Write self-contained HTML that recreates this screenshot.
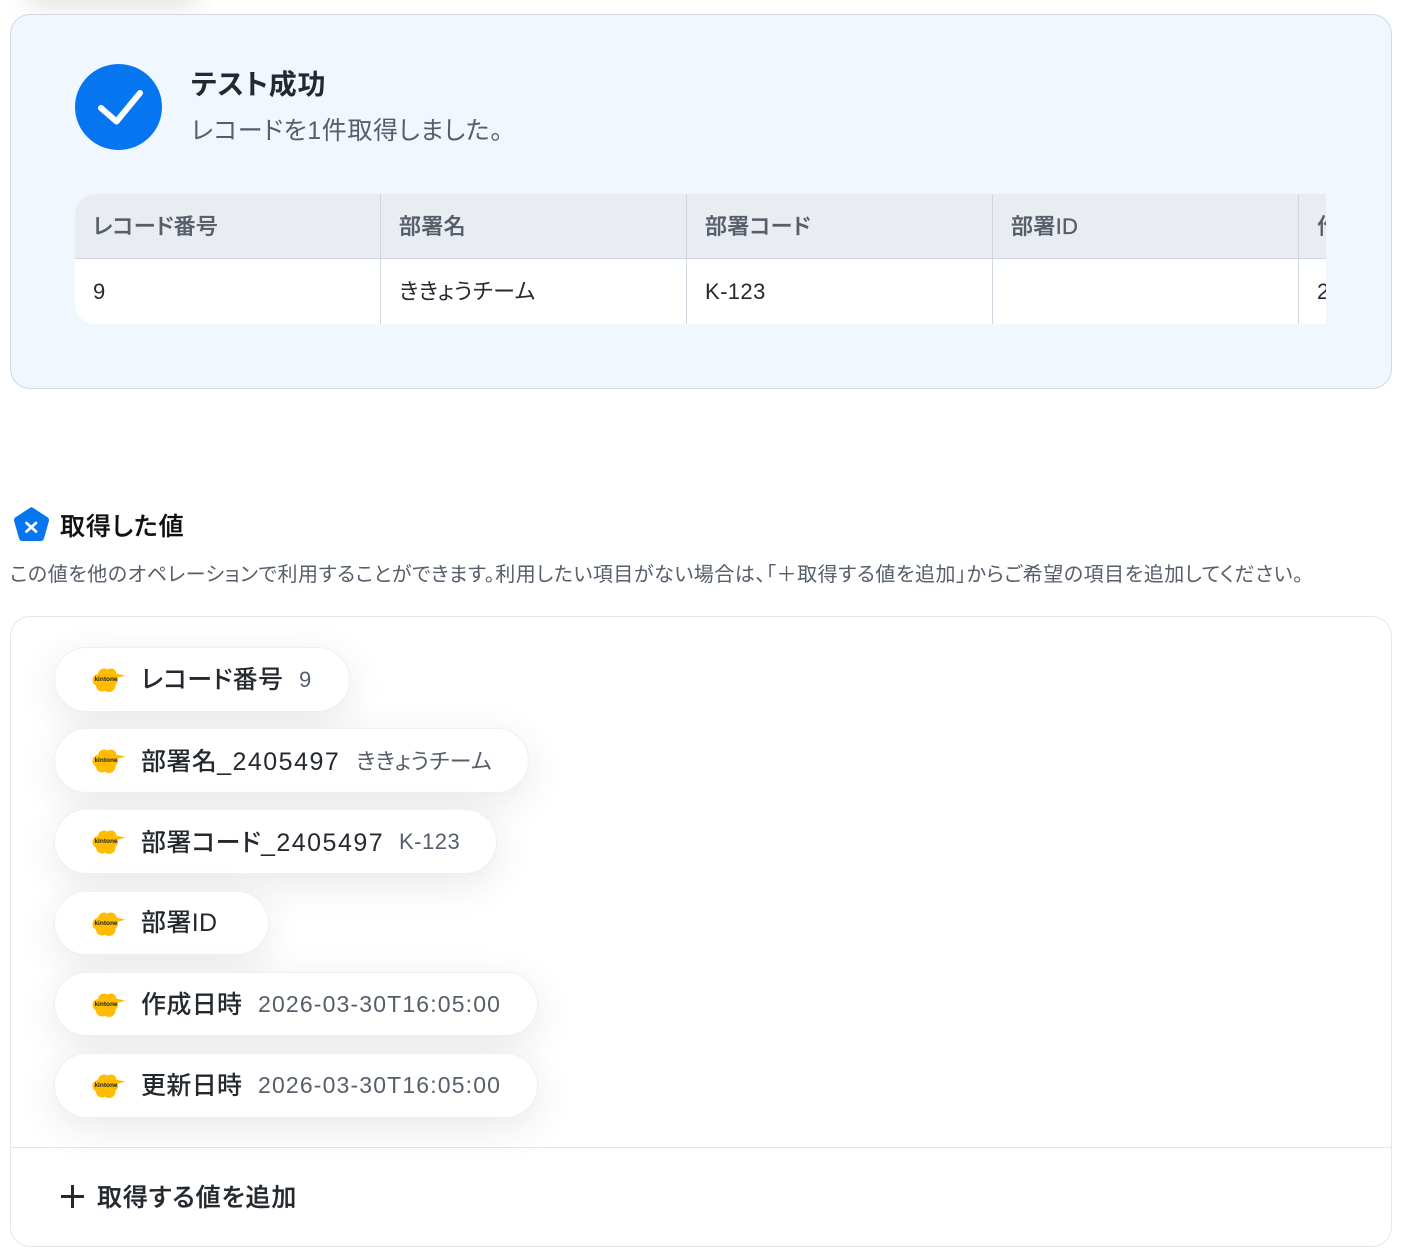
<!DOCTYPE html>
<html lang="ja"><head><meta charset="utf-8"><title>テスト成功</title>
<style>
*{box-sizing:border-box}
html,body{margin:0;padding:0;background:#fff}
body{position:relative;width:1406px;height:1252px;overflow:hidden;font-family:"Liberation Sans","Noto Sans CJK JP",sans-serif;font-feature-settings:"palt";color:#24292f}
.a{position:absolute}
.t{position:absolute;white-space:nowrap;line-height:1}
.top-sh{left:25px;top:-30px;width:175px;height:30px;box-shadow:0 6px 26px rgba(0,0,0,.12);border-radius:15px}
.panel{left:10px;top:14px;width:1382px;height:375px;background:#f0f7ff;border:1px solid #d0d9e4;border-radius:20px}
.circle{left:75px;top:64px;width:87px;height:86px;border-radius:50%;background:#0576f0}
.table{left:75px;top:194px;width:1251px;height:130px;overflow:hidden;border-radius:20px 0 0 20px;background:#fff}
.head{left:0;top:0;width:1251px;height:65px;background:#e9ecf1;border-bottom:1px solid #cfd6df}
.v{top:0;width:1px;height:130px;background:#cfd6df}
.th{font-size:22px;font-weight:500;color:#565e6b;top:22px;letter-spacing:.3px;-webkit-text-stroke:.3px #565e6b}
.td{font-size:22px;color:#24292f;top:87px;letter-spacing:.4px}
.card{left:10px;top:616px;width:1382px;height:631px;border:1px solid #e3e6ec;border-radius:20px;background:#fff}
.sep{left:11px;top:1147px;width:1380px;height:1px;background:#e3e6ec}
.pill{position:absolute;left:54px;height:65px;background:#fff;border:1px solid #eef0f4;border-radius:33px;box-shadow:0 10px 38px rgba(30,35,50,.1)}
.pill svg{position:absolute;left:36px;top:18px}
.k{font-size:25px;font-weight:500;color:#24292f;position:absolute;left:86px;top:19px;white-space:nowrap;line-height:1;letter-spacing:.35px}
.k span{letter-spacing:1.5px}
.val{font-size:22px;color:#565e6b;position:absolute;top:21px;white-space:nowrap;line-height:1;letter-spacing:.5px}
.date{font-size:23px;letter-spacing:1.15px;top:20px}
.lab{font-size:6.5px;font-weight:700;fill:#222;text-anchor:middle}
</style></head><body>
<div class="a top-sh"></div>
<div class="a panel"></div>
<div class="a circle"></div>
<svg class="a" style="left:75px;top:64px" width="87" height="86" viewBox="0 0 87 86"><path d="M26 44 L41.500 57.500 L65 29" fill="none" stroke="#fff" stroke-width="6" stroke-linecap="round" stroke-linejoin="round"/></svg>
<div class="t" style="left:191px;top:71px;font-size:28px;font-weight:700;color:#24292f;letter-spacing:.7px">テスト成功</div>
<div class="t" style="left:191px;top:119px;font-size:25px;color:#565e6b;letter-spacing:.6px">レコードを1件取得しました。</div>

<div class="a table">
  <div class="a head"></div>
  <div class="a v" style="left:305px"></div>
  <div class="a v" style="left:611px"></div>
  <div class="a v" style="left:917px"></div>
  <div class="a v" style="left:1223px"></div>
  <div class="t th" style="left:18px">レコード番号</div>
  <div class="t th" style="left:324px">部署名</div>
  <div class="t th" style="left:630px">部署コード</div>
  <div class="t th" style="left:936px">部署ID</div>
  <div class="t th" style="left:1242px">作成日時</div>
  <div class="t td" style="left:18px">9</div>
  <div class="t td" style="left:324px">ききょうチーム</div>
  <div class="t td" style="left:630px">K-123</div>
  <div class="t td" style="left:1242px">2026</div>
</div>

<svg class="a" style="left:12px;top:505px" width="40" height="38" viewBox="0 0 40 38"><path d="M19.500 2.500 L35 12.500 Q37 14 36.300 16.300 L31.600 33 Q31 35.500 28.500 35.500 L10.500 35.500 Q8 35.500 7.400 33 L2.700 16.300 Q2 14 4 12.500 Z" fill="#0576f0" stroke="#0576f0" stroke-width="1" stroke-linejoin="round"/><path d="M14.500 18 L24 26.500 M24 18 L14.500 26.500" stroke="#fff" stroke-width="2.800" stroke-linecap="round"/></svg>
<div class="t" style="left:60px;top:515px;font-size:25px;font-weight:500;color:#111;letter-spacing:.9px;-webkit-text-stroke:.25px #111">取得した値</div>
<div class="t" style="left:10px;top:565px;font-size:20px;color:#565e6b;letter-spacing:.56px">この値を他のオペレーションで利用することができます。利用したい項目がない場合は、「＋取得する値を追加」からご希望の項目を追加してください。</div>

<div class="a card"></div>
<div class="a sep"></div>

<div class="pill" style="top:647px;width:296px"><svg width="36" height="28" viewBox="0 0 36 28"><g fill="#ffbc00"><circle cx="7.500" cy="14" r="6"/><circle cx="13" cy="8.500" r="6"/><circle cx="20" cy="8" r="5.500"/><circle cx="21.500" cy="14" r="5.500"/><circle cx="18" cy="19.500" r="6.500"/><circle cx="11" cy="19.500" r="6"/><path d="M24 7.500 L34.500 9.500 L26 12 Z"/></g><text class="lab" x="15" y="15">kintone</text></svg><div class="k" style="top:20px">レコード番号</div><div class="val" style="left:244px">9</div></div>

<div class="pill" style="top:728px;width:475px"><svg width="36" height="28" viewBox="0 0 36 28"><g fill="#ffbc00"><circle cx="7.500" cy="14" r="6"/><circle cx="13" cy="8.500" r="6"/><circle cx="20" cy="8" r="5.500"/><circle cx="21.500" cy="14" r="5.500"/><circle cx="18" cy="19.500" r="6.500"/><circle cx="11" cy="19.500" r="6"/><path d="M24 7.500 L34.500 9.500 L26 12 Z"/></g><text class="lab" x="15" y="15">kintone</text></svg><div class="k" style="top:21px">部署名<span>_2405497</span></div><div class="val" style="left:301px;top:22px;letter-spacing:.3px">ききょうチーム</div></div>

<div class="pill" style="top:809px;width:443px"><svg width="36" height="28" viewBox="0 0 36 28"><g fill="#ffbc00"><circle cx="7.500" cy="14" r="6"/><circle cx="13" cy="8.500" r="6"/><circle cx="20" cy="8" r="5.500"/><circle cx="21.500" cy="14" r="5.500"/><circle cx="18" cy="19.500" r="6.500"/><circle cx="11" cy="19.500" r="6"/><path d="M24 7.500 L34.500 9.500 L26 12 Z"/></g><text class="lab" x="15" y="15">kintone</text></svg><div class="k" style="top:21px">部署コード<span>_2405497</span></div><div class="val" style="left:344px">K-123</div></div>

<div class="pill" style="top:891px;width:215px;height:64px"><svg width="36" height="28" viewBox="0 0 36 28"><g fill="#ffbc00"><circle cx="7.500" cy="14" r="6"/><circle cx="13" cy="8.500" r="6"/><circle cx="20" cy="8" r="5.500"/><circle cx="21.500" cy="14" r="5.500"/><circle cx="18" cy="19.500" r="6.500"/><circle cx="11" cy="19.500" r="6"/><path d="M24 7.500 L34.500 9.500 L26 12 Z"/></g><text class="lab" x="15" y="15">kintone</text></svg><div class="k" style="top:19px">部署ID</div></div>

<div class="pill" style="top:972px;width:484px;height:64px"><svg width="36" height="28" viewBox="0 0 36 28"><g fill="#ffbc00"><circle cx="7.500" cy="14" r="6"/><circle cx="13" cy="8.500" r="6"/><circle cx="20" cy="8" r="5.500"/><circle cx="21.500" cy="14" r="5.500"/><circle cx="18" cy="19.500" r="6.500"/><circle cx="11" cy="19.500" r="6"/><path d="M24 7.500 L34.500 9.500 L26 12 Z"/></g><text class="lab" x="15" y="15">kintone</text></svg><div class="k" style="top:20px">作成日時</div><div class="val date" style="left:203px">2026-03-30T16:05:00</div></div>

<div class="pill" style="top:1053px;width:484px"><svg width="36" height="28" viewBox="0 0 36 28"><g fill="#ffbc00"><circle cx="7.500" cy="14" r="6"/><circle cx="13" cy="8.500" r="6"/><circle cx="20" cy="8" r="5.500"/><circle cx="21.500" cy="14" r="5.500"/><circle cx="18" cy="19.500" r="6.500"/><circle cx="11" cy="19.500" r="6"/><path d="M24 7.500 L34.500 9.500 L26 12 Z"/></g><text class="lab" x="15" y="15">kintone</text></svg><div class="k" style="top:20px">更新日時</div><div class="val date" style="left:203px">2026-03-30T16:05:00</div></div>

<svg class="a" style="left:60px;top:1184px" width="25" height="25" viewBox="0 0 25 25"><path d="M12.500 1 V24 M1 12.500 H24" stroke="#24292f" stroke-width="3"/></svg>
<div class="t" style="left:97px;top:1186px;font-size:25px;font-weight:500;color:#24292f;letter-spacing:.9px;-webkit-text-stroke:.25px #24292f">取得する値を追加</div>
</body></html>
